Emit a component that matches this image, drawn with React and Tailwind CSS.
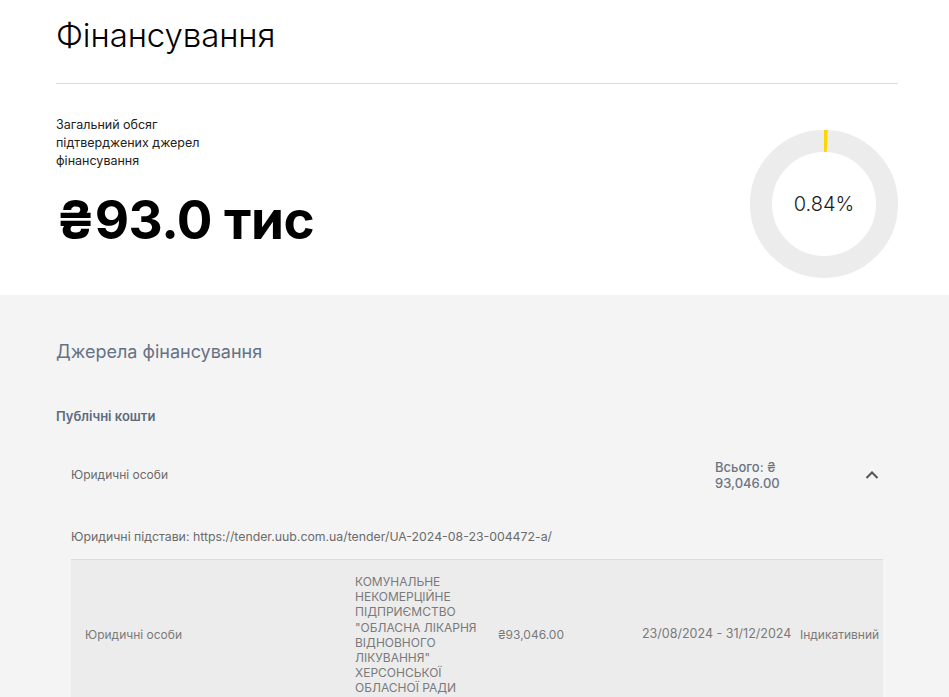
import React from 'react';

const Donut = ({ percent }) => {
  const r = 63;
  const c = 2 * Math.PI * r;
  const len = (c * percent) / 100;
  return (
    <div className="relative w-[148px] h-[148px] mt-[14px]">
      <svg width="148" height="148" viewBox="0 0 148 148">
        <circle cx="74" cy="74" r={r} fill="none" stroke="#ececec" strokeWidth="22" />
        <circle
          cx="74"
          cy="74"
          r={r}
          fill="none"
          stroke="#ffd400"
          strokeWidth="22"
          strokeDasharray={`${len} ${c}`}
          transform="rotate(-90 74 74)"
        />
      </svg>
      <div className="absolute inset-0 flex items-center justify-center text-[20px] font-light text-[#1a1a1a]">
        {percent}%
      </div>
    </div>
  );
};

const ChevronUp = () => (
  <svg width="14" height="10" viewBox="0 0 14 10" fill="none">
    <path d="M1.5 8L7 2.5 12.5 8" stroke="#555" strokeWidth="2" />
  </svg>
);

const App = () => {
  return (
    <div className="min-h-screen bg-[#f4f4f4] font-['Inter',sans-serif]">
      {/* Summary */}
      <section className="bg-white pl-14 pr-[51px] pt-[16px] h-[295px]">
        <h1 className="text-[33px] leading-[38px] font-light text-black tracking-[-0.1px]">Фінансування</h1>
        <div className="mt-[29px] border-t border-[#dcdcdc]" />
        <div className="flex justify-between items-start mt-[32px]">
          <div>
            <div className="w-[160px] text-[12.5px] leading-[18px] text-[#222]">
              Загальний обсяг підтверджених джерел фінансування
            </div>
            <div className="mt-[22px] text-[53px] leading-[56px] font-bold text-black tracking-[-0.5px]">
              ₴93.0 тис
            </div>
          </div>
          <Donut percent={0.84} />
        </div>
      </section>

      {/* Sources */}
      <section className="pl-14 pr-[51px] pt-[43px] pb-10">
        <h2 className="text-[18px] leading-[27px] text-[#667284]">Джерела фінансування</h2>
        <div className="mt-[41px] text-[13px] leading-[20px] font-semibold text-[#5c6b80]">Публічні кошти</div>

        <div className="pl-[15px] pr-[15px]">
          <div className="flex items-center h-[66px] mt-[16px]">
            <div className="text-[12px] text-[#6b6b6b]">Юридичні особи</div>
            <div className="ml-auto w-[100px] text-[13px] leading-[16px] font-medium text-[#6b7585]">
              Всього: ₴ 93,046.00
            </div>
            <div className="ml-[50px] mr-[4px] w-[14px] flex justify-center">
              <ChevronUp />
            </div>
          </div>

          <div className="mt-[19px] text-[12.3px] leading-[20px] text-[#6b6b6b]">
            Юридичні підстави: https://tender.uub.com.ua/tender/UA-2024-08-23-004472-a/
          </div>

          <div className="mt-[12px] border-t border-[#dcdcdc] bg-[#ececec] overflow-hidden">
            <div className="flex items-center text-[12px] text-[#7a7a7a] whitespace-nowrap">
              <div className="w-[270px] shrink-0 pl-[14px]">Юридичні особи</div>
              <div className="w-[143px] shrink-0 pl-[14px] pr-[6px] py-[14px] whitespace-normal leading-[15.2px] uppercase">
                Комунальне некомерційне підприємство "Обласна лікарня відновного лікування" херсонської обласної ради
              </div>
              <div className="w-[144px] shrink-0 pl-[14px]">₴93,046.00</div>
              <div className="w-[172px] shrink-0 pl-[14px] text-[12.5px]">23/08/2024 - 31/12/2024</div>
              <div className="shrink-0">Індикативний</div>
            </div>
          </div>
        </div>
      </section>
    </div>
  );
};

export default App;
